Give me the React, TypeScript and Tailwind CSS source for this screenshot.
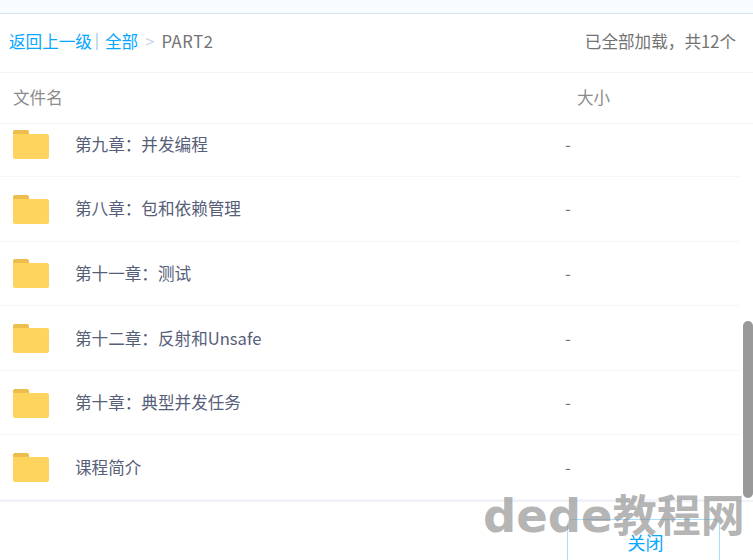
const folders = [
  '第九章：并发编程',
  '第八章：包和依赖管理',
  '第十一章：测试',
  '第十二章：反射和Unsafe',
  '第十章：典型并发任务',
  '课程简介',
];

function FolderIcon() {
  return (
    <svg width="36" height="30" viewBox="0 0 36 30" className="shrink-0">
      <path d="M0 3a2 2 0 0 1 2-2h12a2 2 0 0 1 2 2v3H0z" fill="#EDBE4B" />
      <path d="M0 5h34a2 2 0 0 1 2 2v21a2 2 0 0 1-2 2H2a2 2 0 0 1-2-2z" fill="#FFD45E" />
    </svg>
  );
}

export default function App() {
  return (
    <div className="relative h-[560px] w-[753px] overflow-hidden bg-white font-['Noto_Sans_CJK_SC','Noto_Sans',sans-serif] text-[16.6px]">
      <div className="h-[14px] border-b border-[#d5e3ee] bg-[#f7fcff]"></div>

      <div className="flex h-[59px] items-center justify-between border-b border-[#f3f4fa] pb-[3px] pl-[9px] pr-[17px]">
        <div className="flex items-center">
          <span className="text-[#06a7ff]">返回上一级</span>
          <span className="ml-[4px] mr-[7px] h-[17px] w-[2px] bg-[#c5dcf5]"></span>
          <span className="text-[#06a7ff]">全部</span>
          <span className="ml-[7px] mr-[7px] text-[#c5d4ea]">&gt;</span>
          <span className="tracking-[0.6px] text-[#737373]">PART2</span>
        </div>
        <div className="text-[#737373]">已全部加载，共12个</div>
      </div>

      <div className="flex h-[51px] items-center border-b border-[#f3f4fa] pb-[2px] pl-[13px] text-[#8c8c8c]">
        <span className="w-[564px]">文件名</span>
        <span>大小</span>
      </div>

      <div className="h-[376px] overflow-hidden pr-[13px]">
        <div className="-mt-[11.6px]">
          {folders.map((name) => (
            <div key={name} className="flex h-[64.6px] items-center border-b border-[#f5f6fb] pl-[13px]">
              <FolderIcon />
              <span className="ml-[26px] w-[490px] text-[#565e78]">{name}</span>
              <span className="text-[#737373]">-</span>
            </div>
          ))}
        </div>
      </div>

      <div className="flex h-[60px] justify-end border-t-2 border-[#f1f2f7] pr-[33px] pt-[17px]">
        <div className="flex h-[60px] w-[153px] justify-center rounded-t-[6px] border border-[#a8dffc] pl-[4px] pt-[9px] text-[18px] text-[#06a7ff]">
          关闭
        </div>
      </div>

      <div className="absolute left-[743px] top-[321px] h-[177px] w-[10px] rounded-[5px] bg-[#999]"></div>
      <div className="absolute left-[483px] top-[484px] flex items-baseline whitespace-nowrap font-['DejaVu_Sans','Noto_Sans_CJK_SC',sans-serif] font-bold leading-[64px] text-[#8a8a8a]/65">
        <span className="text-[46.5px]">dede</span>
        <span className="text-[44px]">教程网</span>
      </div>
    </div>
  );
}
